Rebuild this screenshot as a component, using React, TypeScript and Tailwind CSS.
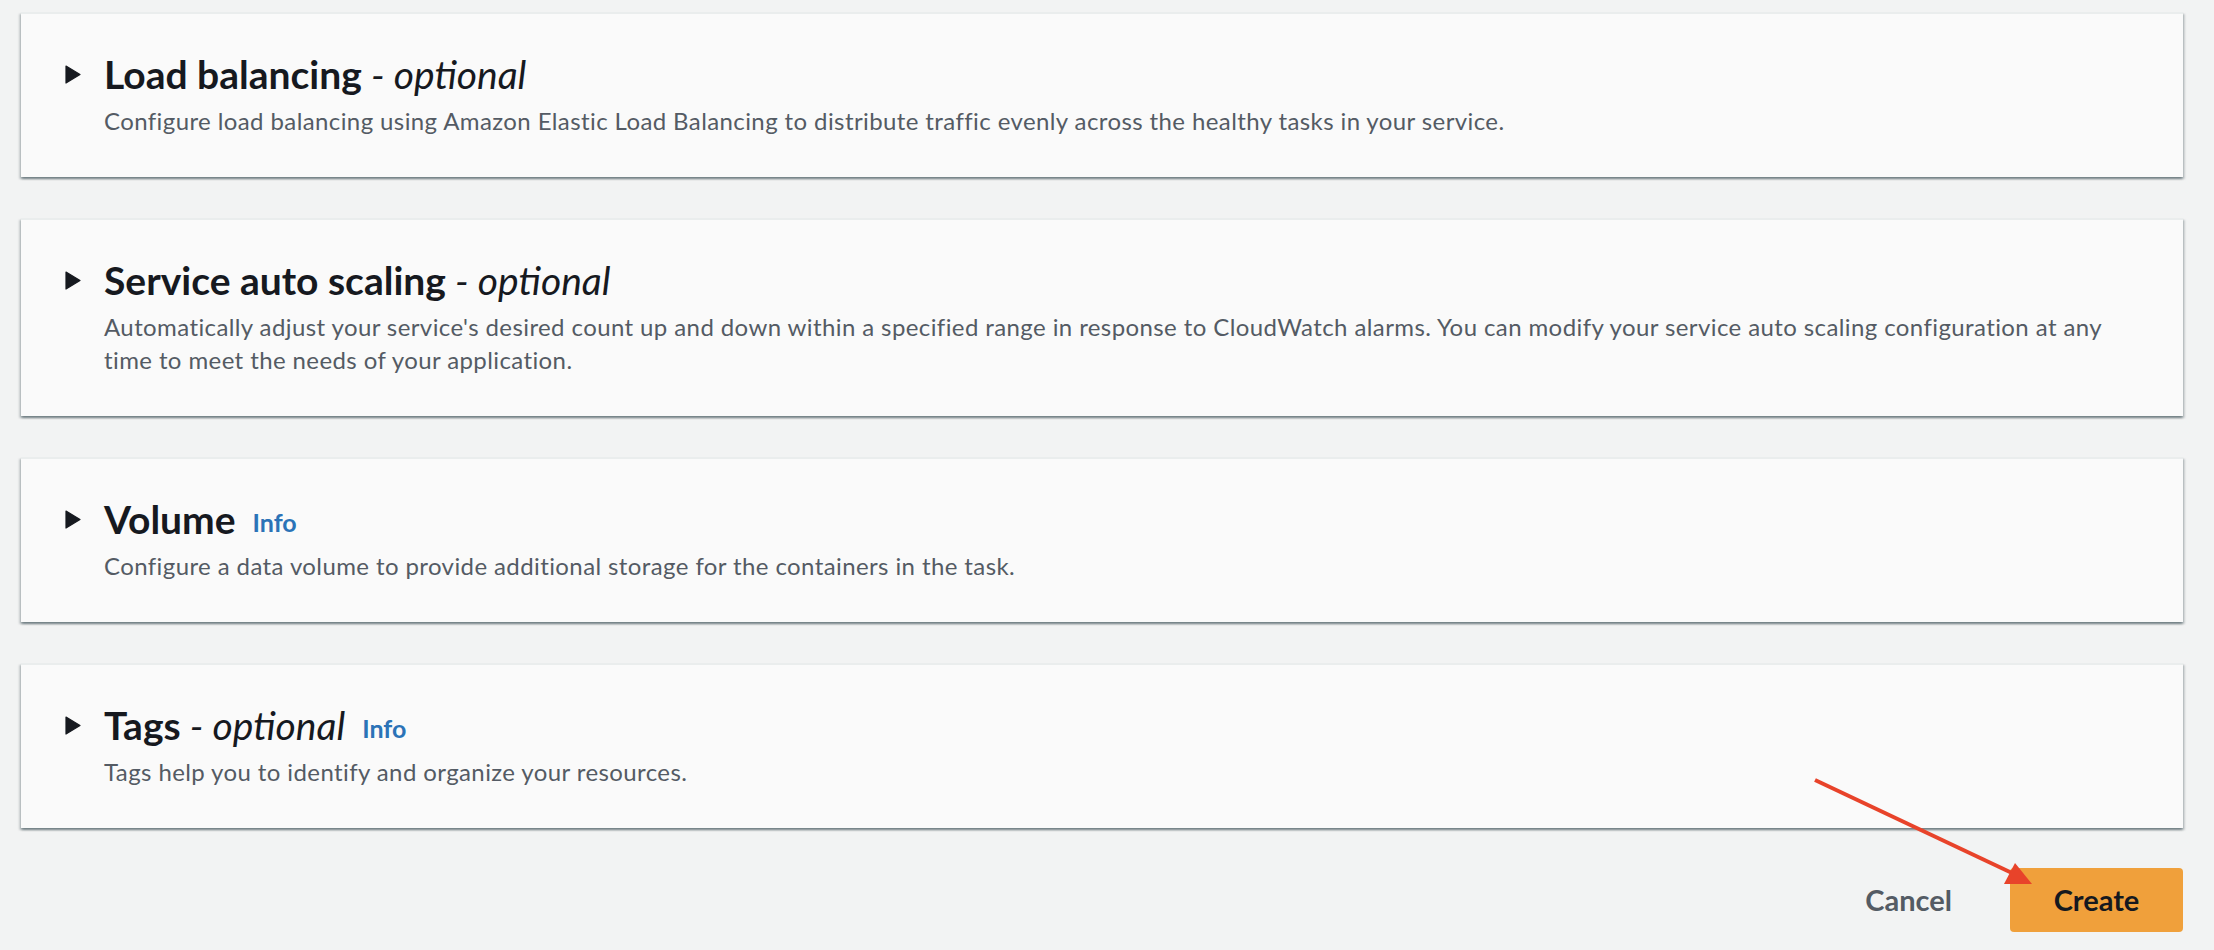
import React from "react";

type Seccion = {
  titulo: string;
  opcional?: boolean;
  info?: boolean;
  texto: string;
};

const secciones: Seccion[] = [
  {
    titulo: "Load balancing",
    opcional: true,
    texto:
      "Configure load balancing using Amazon Elastic Load Balancing to distribute traffic evenly across the healthy tasks in your service.",
  },
  {
    titulo: "Service auto scaling",
    opcional: true,
    texto:
      "Automatically adjust your service's desired count up and down within a specified range in response to CloudWatch alarms. You can modify your service auto scaling configuration at any time to meet the needs of your application.",
  },
  {
    titulo: "Volume",
    info: true,
    texto: "Configure a data volume to provide additional storage for the containers in the task.",
  },
  {
    titulo: "Tags",
    opcional: true,
    info: true,
    texto: "Tags help you to identify and organize your resources.",
  },
];

function Triangulo() {
  return (
    <svg width="16" height="19" viewBox="0 0 16 19" className="shrink-0">
      <path d="M1 1 L15 9.5 L1 18 Z" fill="#16191f" stroke="#16191f" strokeWidth="1.2" strokeLinejoin="round" />
    </svg>
  );
}

function Tarjeta({ s }: { s: Seccion }) {
  return (
    <div className="bg-[#fafafa] border-t-2 border-[#eaeded] shadow-[0_2px_2px_0_rgba(0,28,36,0.35),2px_2px_2px_0_rgba(0,28,36,0.15),-2px_2px_2px_0_rgba(0,28,36,0.15)] pl-[44px] pr-[60px] pt-[38px] pb-[40px]">
      <div className="flex items-center h-[44px]">
        <Triangulo />
        <h2 className="ml-[23px] text-[39px] font-bold text-[#16191f] leading-none">
          {s.titulo}
          {s.opcional && (
            <span className="font-normal italic"> - optional</span>
          )}
        </h2>
        {s.info && (
          <a className="ml-[17px] mt-[8px] text-[25px] font-bold text-[#2b73b7]">Info</a>
        )}
      </div>
      <p className="mt-[8px] ml-[39px] text-[24px] leading-[33px] text-[#545b64] tracking-[0.4px]">
        {s.texto}
      </p>
    </div>
  );
}

export default function App() {
  return (
    <div className="relative h-[950px] overflow-hidden bg-[#f2f3f3] font-['Lato',sans-serif]">
      <div className="pl-[21px] pr-[31px] pt-[12px] flex flex-col gap-[41px]">
        {secciones.map((s) => (
          <Tarjeta key={s.titulo} s={s} />
        ))}
      </div>

      {/* Acciones */}
      <div className="mt-[40px] pr-[31px] flex items-center justify-end gap-[58px]">
        <button className="text-[29px] font-bold text-[#545b64]">Cancel</button>
        <button className="w-[173px] h-[64px] rounded-[4px] bg-[#f0a03b] text-[29px] font-bold text-[#16191f]">
          Create
        </button>
      </div>

      {/* Flecha roja */}
      <svg className="absolute left-0 top-0 pointer-events-none" width="2214" height="950">
        <line x1="1815" y1="780" x2="2012" y2="873" stroke="#e8432a" strokeWidth="4" strokeLinecap="butt" />
        <polygon points="2032,884 2004,884 2015,863" fill="#e8432a" />
      </svg>
    </div>
  );
}
